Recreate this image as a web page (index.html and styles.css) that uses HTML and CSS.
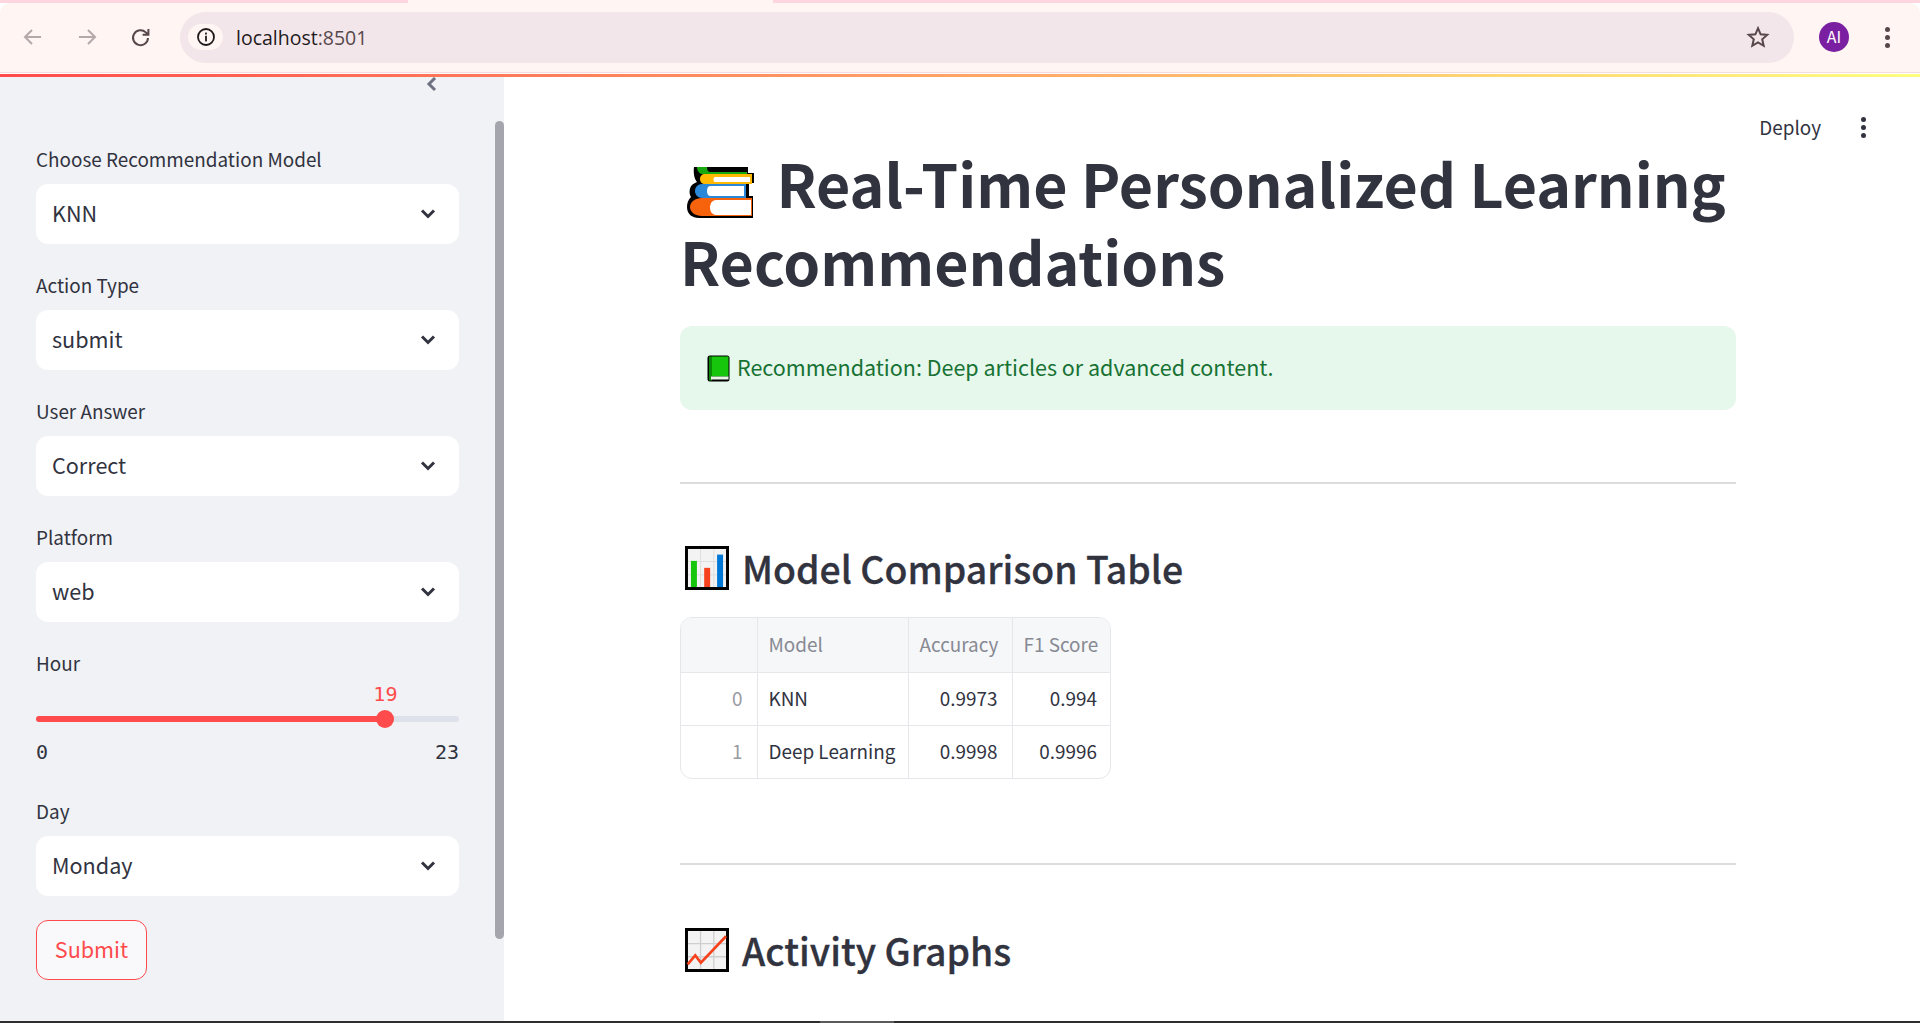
FILE: index.html
```html
<!DOCTYPE html>
<html lang="en">
<head>
  <meta charset="UTF-8" />
  <title>Real-Time Personalized Learning Recommendations</title>
  <link rel="stylesheet" href="styles.css">
</head>
<body>
  <div class="tabstrip"><div class="tab"></div></div>

  <div class="toolbar">
    <svg class="nav-icon dim" viewBox="0 0 24 24"><path d="M20 12H5M11 5l-7 7 7 7"/></svg>
    <svg class="nav-icon dim" viewBox="0 0 24 24"><path d="M4 12h15M13 5l7 7-7 7"/></svg>
    <svg class="nav-icon" viewBox="0 0 24 24"><path d="M19 13a7.5 7.5 0 1 1-2.2-5.6L19 9.5M19.4 4v5.8h-5.8"/></svg>
    <div class="omnibox">
      <div class="site-chip">
        <svg width="20" height="20" viewBox="0 0 20 20"><circle cx="10" cy="10" r="8" fill="none" stroke="#1f1a1c" stroke-width="1.8"/><rect x="9.1" y="8.8" width="1.8" height="5.6" fill="#1f1a1c"/><rect x="9.1" y="5.6" width="1.8" height="1.9" fill="#1f1a1c"/></svg>
      </div>
      <div class="url">localhost<span class="url-port">:8501</span></div>
      <svg class="star" width="24" height="24" viewBox="0 0 24 24"><path d="M12 3.2l2.6 6.1 6.6.6-5 4.4 1.5 6.5-5.7-3.4-5.7 3.4 1.5-6.5-5-4.4 6.6-.6z"/></svg>
    </div>
    <div class="avatar">AI</div>
    <div class="kebab browser-kebab"><i></i><i></i><i></i></div>
  </div>
  <div class="rainbow"></div>

  <div class="app">
    <aside class="sidebar">
      <svg class="collapse" width="14" height="16" viewBox="0 0 14 16"><path d="M10 2L4 8l6 6"/></svg>
      <div class="scrollbar"></div>

      <div class="field">
        <label>Choose Recommendation Model</label>
        <div class="select"><span>KNN</span><svg width="16" height="10" viewBox="0 0 16 10"><path d="M2 1.5l6 6 6-6"/></svg></div>
      </div>
      <div class="field">
        <label>Action Type</label>
        <div class="select"><span>submit</span><svg width="16" height="10" viewBox="0 0 16 10"><path d="M2 1.5l6 6 6-6"/></svg></div>
      </div>
      <div class="field">
        <label>User Answer</label>
        <div class="select"><span>Correct</span><svg width="16" height="10" viewBox="0 0 16 10"><path d="M2 1.5l6 6 6-6"/></svg></div>
      </div>
      <div class="field">
        <label>Platform</label>
        <div class="select"><span>web</span><svg width="16" height="10" viewBox="0 0 16 10"><path d="M2 1.5l6 6 6-6"/></svg></div>
      </div>
      <div class="field">
        <label>Hour</label>
        <div class="slider">
          <div class="slider-fill" style="width: 82.6%">
            <span class="slider-thumb"><span class="slider-value">19</span></span>
          </div>
        </div>
        <div class="ticks"><span>0</span><span>23</span></div>
      </div>
      <div class="field">
        <label>Day</label>
        <div class="select"><span>Monday</span><svg width="16" height="10" viewBox="0 0 16 10"><path d="M2 1.5l6 6 6-6"/></svg></div>
      </div>
      <button class="submit">Submit</button>
    </aside>

    <main class="main">
      <div class="deploy-bar">
        <span class="deploy">Deploy</span>
        <div class="kebab"><i></i><i></i><i></i></div>
      </div>

      <h1>
        <svg class="emoji-books" width="68" height="54" viewBox="0 0 68 54">
          <path d="M7 0h54v6h6v10h-6v1h1v12h4v22H12C5 51 0 47 0 40c0-4 1-7 4-10-2-3-2-9 1-12 1-1 3-2 5-3-2-2-4-8-3-15z" fill="#000"/>
          <path d="M10 0h10c0 3 1 5 4 5h36v2H14c-3-2-4-4-4-7z" fill="#16a80c"/>
          <path d="M18 7h47v10H18c-3 0-5-2-5-5s2-5 5-5z" fill="#ffb900"/>
          <path d="M28 10h35v5H28c-2 0-2-5 0-5z" fill="#fff"/>
          <path d="M15 17h44v14H15c-4 0-7-3-7-7s3-7 7-7z" fill="#2b88d8"/>
          <path d="M23 19h34v10H23c-4 0-4-10 0-10z" fill="#fff"/>
          <path d="M15 31h50v18H15c-7 0-12-4-12-9s5-9 12-9z" fill="#f7630c"/>
          <path d="M29 33h35v15H29c-8 0-8-15 0-15z" fill="#fff"/>
        </svg>
        Real-Time Personalized Learning Recommendations
      </h1>

      <div class="alert">
        <svg class="emoji-book" width="23" height="27" viewBox="0 0 23 27">
          <rect x="0.5" y="0.5" width="22" height="26" rx="2.5" fill="#000"/>
          <rect x="2" y="1.5" width="3" height="24" fill="#0b8a05"/>
          <rect x="5" y="1.5" width="16.5" height="20" fill="#16c60c"/>
          <rect x="4" y="21.5" width="17.5" height="3" fill="#e8f5e6"/>
        </svg>
        <span>Recommendation: Deep articles or advanced content.</span>
      </div>

      <hr class="divider first">

      <h2>
        <svg width="44" height="44" viewBox="0 0 133 133">
          <rect width="133" height="133" fill="#000"/>
          <rect x="9" y="9" width="115" height="115" fill="#f3f3f3"/>
          <path d="M47 9v115M87 9v115M9 47h115M9 87h115" stroke="#dedede" stroke-width="3"/>
          <rect x="18" y="45" width="18" height="79" fill="#16c60c"/>
          <rect x="58" y="66" width="18" height="58" fill="#f7421e"/>
          <rect x="97" y="26" width="18" height="98" fill="#0078d7"/>
        </svg>
        <span>Model Comparison Table</span>
      </h2>

      <div class="table-wrap">
        <table>
          <thead>
            <tr><th class="col-index"></th><th class="col-model left">Model</th><th class="col-acc">Accuracy</th><th class="col-f1">F1 Score</th></tr>
          </thead>
          <tbody>
            <tr><td class="index">0</td><td class="left">KNN</td><td>0.9973</td><td>0.994</td></tr>
            <tr><td class="index">1</td><td class="left">Deep Learning</td><td>0.9998</td><td>0.9996</td></tr>
          </tbody>
        </table>
      </div>

      <hr class="divider second">

      <h2>
        <svg width="44" height="44" viewBox="0 0 133 133">
          <rect width="133" height="133" fill="#000"/>
          <rect x="9" y="9" width="115" height="115" fill="#f3f3f3"/>
          <path d="M47 9v115M87 9v115M9 47h115M9 87h115" stroke="#cfcfcf" stroke-width="4"/>
          <path d="M8 110l23-27 17 22 76-80" fill="none" stroke="#f7421e" stroke-width="8"/>
        </svg>
        <span>Activity Graphs</span>
      </h2>
    </main>
  </div>

  <div class="taskbar"><div class="taskbar-thumb"></div></div>
</body>
</html>
```

FILE: styles.css
```css
html, body {
  margin: 0;
  padding: 0;
  height: 100%;
  overflow: hidden;
}
body {
  display: flex;
  flex-direction: column;
  background: #fff;
  color: #31333f;
  font-family: "Noto Sans CJK JP", "Noto Sans", sans-serif;
}

/* browser chrome */
.tabstrip {
  height: 3px;
  background: #ffd6df;
  flex: none;
}
.tab {
  width: 365px;
  height: 3px;
  margin-left: 408px;
  background: #fff5f3;
}
.toolbar {
  flex: none;
  height: 68px;
  display: flex;
  align-items: center;
  background: #fff5f3;
  border-radius: 10px 10px 0 0;
  border-bottom: 1px solid #f3dcdf;
  padding: 0 0 1px 21px;
}
.nav-icon {
  width: 24px;
  height: 24px;
  margin-right: 30px;
  fill: none;
  stroke: #57474b;
  stroke-width: 2;
  flex: none;
}
.nav-icon.dim {
  stroke: #b5a8aa;
}
.omnibox {
  width: 1614px;
  height: 51px;
  margin-left: -3px;
  border-radius: 26px;
  background: #f3e6ea;
  display: flex;
  align-items: center;
  flex: none;
}
.site-chip {
  width: 35px;
  height: 26px;
  margin-left: 8px;
  border-radius: 13px;
  background: #fff5f3;
  display: flex;
  align-items: center;
  justify-content: center;
}
.url {
  margin-left: 13px;
  font-family: "Open Sans", sans-serif;
  font-size: 19.5px;
  color: #1f1a1c;
  flex: 1;
}
.url-port {
  color: #57474b;
}
.star {
  fill: none;
  stroke: #57474b;
  stroke-width: 2;
  margin-right: 24px;
}
.avatar {
  width: 30px;
  height: 30px;
  margin-left: 25px;
  border-radius: 50%;
  background: #7b1fa2;
  color: #fff;
  font-size: 16px;
  line-height: 28px;
  text-align: center;
  flex: none;
}
.kebab {
  display: flex;
  flex-direction: column;
  gap: 3px;
}
.kebab i {
  display: block;
  width: 5px;
  height: 5px;
  border-radius: 50%;
  background: #31333f;
}
.browser-kebab {
  margin-left: 36px;
}
.browser-kebab i {
  background: #57474b;
}
.rainbow {
  flex: none;
  height: 3px;
  margin-top: 1px;
  background: linear-gradient(90deg, #ff4b4b, #fffd80);
}

/* streamlit app */
.app {
  flex: 1;
  display: flex;
  min-height: 0;
}
.sidebar {
  position: relative;
  width: 504px;
  box-sizing: border-box;
  flex: none;
  padding: 65px 45px 0 36px;
  background: #f0f2f6;
  overflow: hidden;
}
.collapse {
  position: absolute;
  top: -1px;
  left: 425px;
  fill: none;
  stroke: #6e7280;
  stroke-width: 3;
}
.scrollbar {
  position: absolute;
  top: 44px;
  right: 0;
  width: 9px;
  height: 818px;
  border-radius: 5px;
  background: #a5a6ad;
}
.field {
  margin-bottom: 24px;
}
.field label {
  display: block;
  height: 36px;
  margin-bottom: 6px;
  font-size: 18.9px;
  line-height: 34px;
}
.select {
  height: 60px;
  padding: 0 23px 0 16px;
  display: flex;
  align-items: center;
  justify-content: space-between;
  background: #fff;
  border-radius: 12px;
  font-size: 21.6px;
}
.select span {
  padding-bottom: 3px;
}
.select svg {
  fill: none;
  stroke: #31333f;
  stroke-width: 3;
}
.slider {
  height: 6px;
  margin-top: 34px;
  border-radius: 3px;
  background: #dde1e9;
}
.slider-fill {
  position: relative;
  height: 6px;
  border-radius: 3px;
  background: #ff4b4b;
}
.slider-thumb {
  position: absolute;
  right: -9px;
  top: -6px;
  width: 18px;
  height: 18px;
  border-radius: 50%;
  background: #ff4b4b;
}
.slider-value {
  position: absolute;
  left: 50%;
  top: -30px;
  transform: translateX(-50%);
  font-family: "DejaVu Sans Mono", monospace;
  font-size: 20px;
  line-height: 28px;
  color: #ff4b4b;
}
.ticks {
  display: flex;
  justify-content: space-between;
  margin-top: 16px;
  height: 32px;
  font-family: "DejaVu Sans Mono", monospace;
  font-size: 20px;
  line-height: 28px;
}
.submit {
  display: block;
  width: 111px;
  height: 60px;
  padding: 0 0 3px;
  background: #f9f9fb;
  border: 1.5px solid #ff4b4b;
  border-radius: 12px;
  color: #ff4b4b;
  font-family: inherit;
  font-size: 21.6px;
}

/* main column */
.main {
  position: relative;
  flex: 1;
  padding: 66px 184px 0 176px;
  overflow: hidden;
}
.deploy-bar {
  position: absolute;
  top: 32px;
  right: 54px;
  display: flex;
  align-items: center;
  gap: 40px;
  font-size: 18.9px;
  line-height: 36px;
}
h1 {
  margin: 0 0 27px;
  font-size: 59.1px;
  font-weight: 700;
  line-height: 78px;
}
.emoji-books {
  margin: 0 8px 0 7px;
  vertical-align: -13px;
}
.alert {
  height: 84px;
  padding: 0 24px;
  display: flex;
  align-items: center;
  gap: 7px;
  background: #e6f7ec;
  border-radius: 12px;
  color: #177233;
  font-size: 21.5px;
}
.alert span {
  padding-bottom: 3px;
}
.emoji-book {
  margin-left: 3px;
  flex: none;
}
.divider {
  margin: 0;
  border: none;
  height: 2px;
  background: #dcdcde;
}
.divider.first {
  margin-top: 72px;
}
.divider.second {
  margin-top: 84px;
}
h2 {
  margin: 0;
  display: flex;
  align-items: center;
  gap: 13px;
  padding-left: 5px;
  font-size: 37.4px;
  font-weight: 500;
  -webkit-text-stroke: 0.3px #31333f;
  line-height: 54px;
}
.divider.first + h2 {
  margin-top: 57px;
}
.divider.second + h2 {
  margin-top: 58px;
}
.table-wrap {
  width: 429px;
  margin-top: 22px;
  border: 1.5px solid #e6e7ea;
  border-radius: 12px;
  overflow: hidden;
}
table {
  width: 100%;
  border-collapse: collapse;
  table-layout: fixed;
  font-size: 18.9px;
  white-space: nowrap;
}
th, td {
  height: 53px;
  padding: 0 14px 2px 11px;
  border: 1.5px solid #e6e7ea;
  text-align: right;
  font-weight: 400;
  box-sizing: border-box;
}
tr > :first-child {
  border-left: none;
}
tr > :last-child {
  border-right: none;
  padding-right: 13px;
}
thead th {
  border-top: none;
  height: 54px;
  background: #f6f7f9;
  color: #878993;
}
tbody tr:last-child td {
  border-bottom: none;
}
.left {
  text-align: left;
}
.index {
  color: #9a9ba3;
}
.col-index {
  width: 76px;
}
.col-model {
  width: 151px;
}
.col-acc {
  width: 104px;
}

.taskbar {
  flex: none;
  height: 2px;
  background: #2e2e30;
}
.taskbar-thumb {
  width: 74px;
  height: 2px;
  margin-left: 820px;
  background: #5a5a5c;
}
```
